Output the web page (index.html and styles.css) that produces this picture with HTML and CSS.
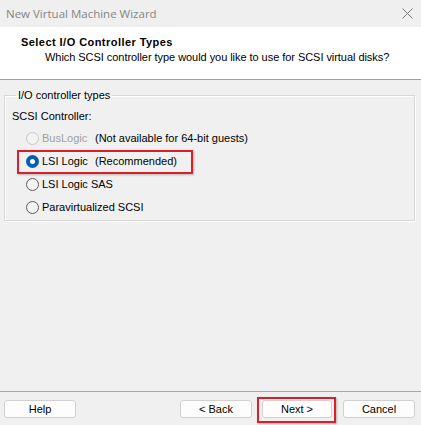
FILE: index.html
```html
<!DOCTYPE html>
<html>
<head>
<meta charset="utf-8">
<link rel="stylesheet" href="styles.css">
</head>
<body>
<div class="window">
  <div class="titlebar">
    <span class="title">New Virtual Machine Wizard</span>
    <svg class="close" width="11" height="11" viewBox="0 0 11 11"><path d="M0.5 0.5 L10.5 10.5 M10.5 0.5 L0.5 10.5" stroke="#7a7a7a" stroke-width="1" fill="none"/></svg>
  </div>
  <div class="header">
    <div class="h-title">Select I/O Controller Types</div>
    <div class="h-sub">Which SCSI controller type would you like to use for SCSI virtual disks?</div>
  </div>
  <div class="content">
    <fieldset class="group">
      <legend>I/O controller types</legend>
      <div class="label">SCSI Controller:</div>
      <div class="row disabled">
        <span class="radio"></span><span class="name">BusLogic</span><span class="note">(Not available for 64-bit guests)</span>
      </div>
      <div class="row highlight">
        <span class="radio checked"></span><span class="name">LSI Logic</span><span class="note">(Recommended)</span>
      </div>
      <div class="row">
        <span class="radio"></span><span class="name">LSI Logic SAS</span>
      </div>
      <div class="row">
        <span class="radio"></span><span class="name">Paravirtualized SCSI</span>
      </div>
    </fieldset>
  </div>
  <div class="footer">
    <button class="btn">Help</button>
    <span class="spacer"></span>
    <button class="btn">&lt; Back</button>
    <button class="btn next">Next &gt;</button>
    <button class="btn">Cancel</button>
  </div>
</div>
</body>
</html>
```
FILE: styles.css
```css
html, body {
  margin: 0;
  padding: 0;
  background: #f0f0f0;
}
.window {
  width: 421px;
  height: 425px;
  display: flex;
  flex-direction: column;
  font-family: "Liberation Sans", Arial, sans-serif;
  font-size: 11px;
  color: #000;
  overflow: hidden;
}
.titlebar {
  height: 27px;
  flex: none;
  display: flex;
  align-items: center;
  padding: 0 8px 0 6px;
  background: #efefef;
}
.title {
  font-family: "Open Sans", "Noto Sans", sans-serif;
  font-size: 11.5px;
  color: #858585;
  flex: 1;
}
.header {
  height: 53px;
  flex: none;
  background: #fff;
  border-bottom: 1px solid #a0a0a0;
  box-sizing: border-box;
  padding: 9px 0 0 21px;
  line-height: 13px;
}
.h-title {
  font-weight: bold;
  letter-spacing: 0.45px;
}
.h-sub {
  padding-left: 24px;
  margin-top: 2px;
  letter-spacing: -0.05px;
}
.content {
  flex: 1;
  padding: 9px 6px 0 4px;
}
.group {
  margin: 0;
  padding: 0 0 1px 7px;
  border: 1px solid #d9d9d9;
  box-shadow: inset 1px 1px 0 #fff, 1px 1px 0 #fff;
  line-height: 13px;
}
.group legend {
  padding: 0 2px;
  margin-left: 4px;
  line-height: 13px;
}
.label {
  margin-top: 8px;
  margin-bottom: 4px;
}
.row {
  height: 23px;
  display: flex;
  align-items: center;
  padding-left: 14px;
}
.radio {
  width: 13px;
  height: 13px;
  box-sizing: border-box;
  border: 1px solid #5a5a5a;
  border-radius: 50%;
  background: #f3f3f3;
  flex: none;
  margin-right: 3px;
}
.radio.checked {
  border: 4px solid #0060b8;
  background: #fff;
}
.disabled .radio {
  border-color: #c8c8c8;
  background: #f3f3f3;
}
.disabled .name {
  color: #a0a0a0;
}
.name {
  width: 53px;
  white-space: nowrap;
}
.note {
  white-space: nowrap;
}
.highlight {
  position: relative;
}
.highlight::after {
  content: "";
  position: absolute;
  left: 5px;
  top: 0;
  width: 176px;
  height: 24px;
  box-sizing: border-box;
  border: 2px solid #d8202a;
  box-shadow: 1px 1px 2px rgba(0,0,0,0.25);
}
.footer {
  flex: none;
  height: 34px;
  border-top: 1px solid #a8a8a8;
  display: flex;
  align-items: flex-start;
  padding: 8px 6px 0 4px;
  box-sizing: border-box;
}
.spacer {
  flex: 1;
}
.btn {
  width: 72px;
  height: 18px;
  margin: 0;
  padding: 0;
  background: #fdfdfd;
  border: 1px solid #d0d0d0;
  border-radius: 3px;
  font-family: "Liberation Sans", Arial, sans-serif;
  font-size: 11px;
  color: #000;
}
.btn + .btn {
  margin-left: 10px;
}
.next {
  width: 70px;
  position: relative;
}
.next::after {
  content: "";
  position: absolute;
  left: -6px;
  top: -4px;
  right: -5px;
  bottom: -6px;
  border: 2px solid #d8202a;
  box-shadow: 1px 1px 2px rgba(0,0,0,0.25);
}
.next + .btn {
  margin-left: 11px;
}
```
